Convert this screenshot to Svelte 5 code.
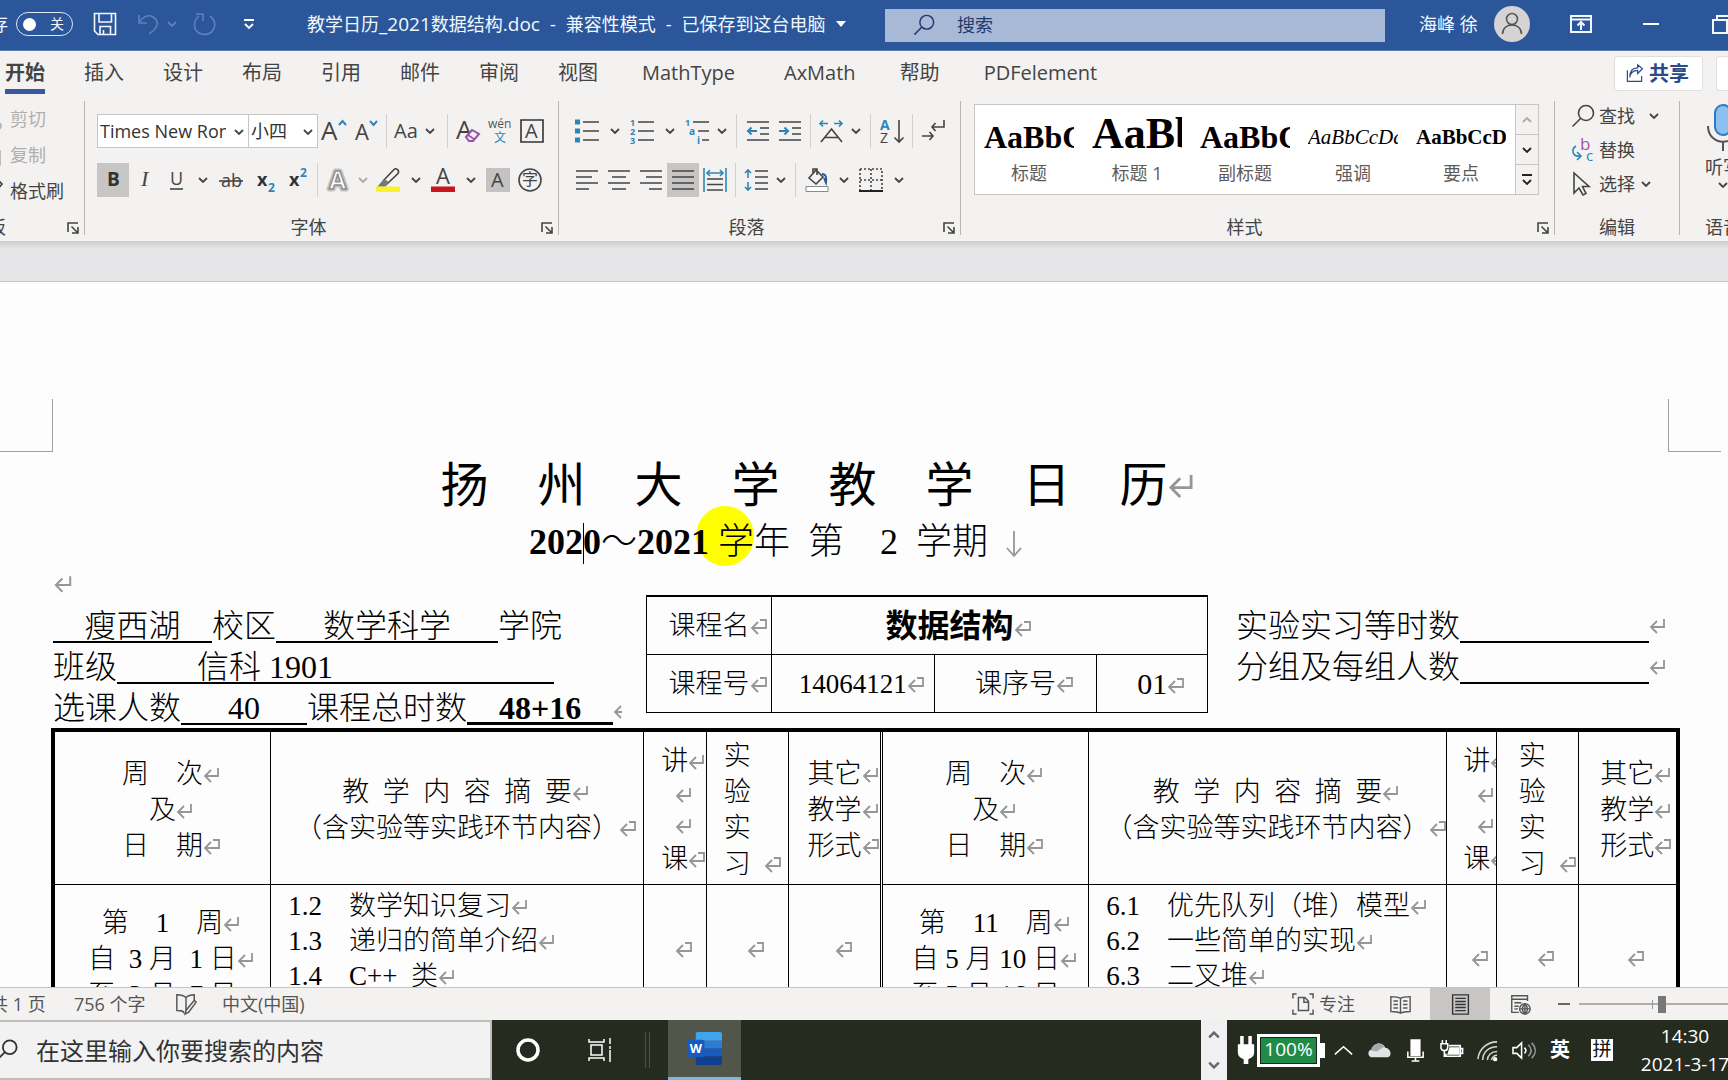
<script>
  const tabs = ['开始', '插入', '设计', '布局', '引用', '邮件', '审阅', '视图', 'MathType', 'AxMath', '帮助', 'PDFelement'];

  const t = (x, y, size, fill, text, extra = '') =>
    `<text x="${x}" y="${y}" font-size="${size}" fill="${fill}" stroke="none" font-family="Open Sans, Noto Sans CJK SC, sans-serif" ${extra}>${text}</text>`;
  const dark = '#444';
  const blue = '#2e86b8';

  const icons = {
    save: '<path d="M1.5 1.5h21v21H5l-3.500-3.500zM6 1.500v8.500h12.500V1.500M7 22.500v-8h10.500v8M10.500 22v-4"/>',
    undo: '<path d="M2 3v8h8M2 11c3-6 9-9 14-6 6 4 5 9 1 13l-5 4"/>',
    redo: '<path d="M3 2h7v7M6 4C0 9 0 17 6 21c6 3 13 1 15-5 2-5 0-9-4-12"/>',
    search: '<circle cx="15" cy="9" r="7.500"/><path d="M9.500 14.500L1.500 22.500"/>',
    display: '<path d="M2 4h20v16H2zM2 7.500h20M12 18v-7M8.500 13.500L12 10l3.500 3.500" stroke-width="2"/>',
    restore: '<path d="M2 8h14v13H2zM6 8V4h15v13h-5" stroke-width="2"/>',
    user: '<circle cx="12" cy="7" r="5.500"/><path d="M2.500 22c0-12 19-12 19 0"/>',
    share: '<path d="M3 8v14h18v-7M6 17c1-7 5-9 10-9v4l6-6-6-5v4C9 5 6 9 6 17z" stroke-width="1.500"/>',
    grow: t(-1, 21, 26, dark, 'A') + '<path d="M17 6l3.500-4L24 6" stroke="#2e86b8" stroke-width="2"/>',
    shrink: t(1, 21, 22, dark, 'A') + '<path d="M16 2l3.500 4L23 2" stroke="#2e86b8" stroke-width="2"/>',
    clear: t(0, 20, 26, dark, 'A') + '<path d="M10 18l6-7 7 4-6 7h-4z" stroke="#9b4fa8" stroke-width="2" fill="#f3f2f1"/><path d="M12 16l6 4" stroke="#9b4fa8"/>',
    phonetic: t(0, 9, 12, '#555', 'wén') + t(6, 23, 12, blue, '文'),
    frame: '<path d="M1 1h22v22H1z" stroke="#333"/>' + t(5, 19, 20, dark, 'A'),
    bold: t(6, 18, 19, '#333', 'B', 'font-weight="bold"'),
    italic: '<text x="8" y="18" font-size="22" fill="#444" stroke="none" font-family="Liberation Serif, serif" font-style="italic">I</text>',
    underline: t(5, 17, 18, dark, 'U') + '<path d="M5 21h13"/>',
    strike: t(2, 19, 18, dark, 'ab') + '<path d="M0 13h24"/>',
    sub: t(2, 18, 18, '#333', 'x', 'font-weight="bold"') + t(13, 24, 12, blue, '2', 'font-weight="bold"'),
    sup: t(2, 18, 18, '#333', 'x', 'font-weight="bold"') + t(13, 9, 12, blue, '2', 'font-weight="bold"'),
    effects: '<g style="font-family: Open Sans, sans-serif; font-weight: bold; font-size: 25px; stroke-linejoin: round"><text x="3" y="21" style="fill: #c4c4c4; stroke: #c4c4c4; stroke-width: 5px">A</text><text x="3" y="21" style="fill: #fff; stroke: #8f8f8f; stroke-width: 1.500px">A</text></g>',
    marker: '<path d="M8 12L18 1.500c2-2 6 1 4 4L12 15z"/><path d="M8 12l4 3-3 3H3z" fill="#777" stroke="#777"/><path d="M0 18.500h24v5.500H0z" fill="#f8f32b" stroke="none"/>',
    color: t(5, 16, 22, dark, 'A') + '<path d="M0 18.500h24v5.500H0z" fill="#c8161d" stroke="none"/>',
    shade: '<path d="M0 0h24v24H0z" fill="#c5c3c2" stroke="none"/>' + t(5, 19, 20, dark, 'A'),
    circled: '<circle cx="12" cy="12" r="11"/>' + t(4, 17, 16, dark, '字'),
    bullets: '<path d="M8 3h16M8 12h16M8 21h16"/><path d="M0 .5h5v5H0zM0 9.500h5v5H0zM0 18.500h5v5H0z" fill="#2e86b8" stroke="none"/>',
    numbers: '<path d="M8 3h16M8 12h16M8 21h16"/>' + t(0, 7, 9, blue, '1', 'font-weight="bold"') + t(0, 16, 9, blue, '2', 'font-weight="bold"') + t(0, 25, 9, blue, '3', 'font-weight="bold"'),
    levels: '<path d="M8 3h16M13 12h11M17 21h7"/>' + t(0, 7, 9, blue, '1', 'font-weight="bold"') + t(4, 16, 10, blue, 'a', 'font-weight="bold"') + t(12, 25, 10, blue, 'i', 'font-weight="bold"'),
    outdent: '<path d="M1 3h22M14 9h9M14 15h9M1 21h22"/><path d="M11 12H2M5.500 8.500L2 12l3.500 3.500" stroke="#2e86b8" stroke-width="2"/>',
    indent: '<path d="M1 3h22M14 9h9M14 15h9M1 21h22"/><path d="M1 12h9M6.500 8.500L10 12l-3.500 3.500" stroke="#2e86b8" stroke-width="2"/>',
    asian: '<path d="M2 23L12.500 10 23 23M6 18.500h13"/><path d="M9 4.500H1M4 1.500L1 4.500l3 3M15 4.500h8M20 1.500l3 3-3 3" stroke="#2e86b8"/>',
    sort: t(0, 11, 14, blue, 'A', 'font-weight="bold"') + t(0, 24, 14, dark, 'Z') + '<path d="M19 1v22M14.500 18.500L19 23l4.500-4.500"/>',
    marks: '<path d="M23 1v7H11M14.500 4L11 8l3.500 4M1 17h11M8.500 13l3.500 4-3.500 4"/>',
    left: '<path d="M1 3h22M1 9h16M1 15h22M1 21h13"/>',
    center: '<path d="M1 3h22M5 9h14M1 15h22M5 21h14"/>',
    right: '<path d="M1 3h22M7 9h16M1 15h22M10 21h13"/>',
    justify: '<path d="M1 3h22M1 9h22M1 15h22M1 21h22"/>',
    spread: '<path d="M4 11h16M4 16.500h16M4 22h16"/><path d="M1 0v24M23 0v24M4 5h16M7 2L4 5l3 3M17 2l3 3-3 3" stroke="#2e86b8"/>',
    spacing: '<path d="M11 3h13M11 9h13M11 15h13M11 21h13"/><path d="M4 2v8M1 5l3-3 3 3M4 22v-8M1 19l3 3 3-3" stroke="#2e86b8"/>',
    bucket: '<path d="M4 10l7-8 7 7-7 7zM8 6V1h4v6"/><path d="M17 6c4 0 5 4 4 9l-2-5" stroke="#2b579a" stroke-width="1.800"/><path d="M1 18.500h22v5H1z" fill="#fff" stroke="#888" stroke-width="1"/>',
    border: '<path d="M1 1h22v22M1 1v22M12 1v22M1 12h22" stroke-dasharray="2 2"/><path d="M0 23h24" stroke="#222" stroke-width="2"/>',
    replace: t(9, 12, 17, '#a64fb0', 'b') + t(15, 23, 15, blue, 'c') + '<path d="M5 8c-5 3-4 11 4 10M6 14l4 4-4 4" stroke="#2e86b8"/>',
    cursor: '<path d="M3 1v20l5-5 4 7 3-1.500-3.500-7H18z"/>',
    cut: '<path d="M8 2l8 14M16 2L8 16" /><circle cx="18" cy="19" r="3"/>',
    copy: '<path d="M4 6l8-5 8 7v14H4zM8 12h10M8 17h10"/>',
    brush: '<path d="M4 18L14 6l5-4 3 3-5 6-8 11M10 10l6 5"/>',
    proof: '<path d="M12 5v14M12 5c-3-3-6-3-10-3v17c4 0 7 0 8 3M12 5c3-3 6-3 9-3v6"/><path d="M21 8l2 2-8 11-4 2 1-4z"/>',
    focus: '<path d="M1 6V1h4M19 1h4v5M1 18v5h4M19 23h4v-5M7 5h7l4 4v10H7zM13 5v5h5"/>',
    book: '<path d="M12 5v17M12 5C9 3 5 3 1 3v17c4 0 8 0 11 2 3-2 7-2 11-2V3c-4 0-8 0-11 2M4 8h5M4 12h5M4 16h5M15 8h5M15 12h5M15 16h5"/>',
    page: '<path d="M3 1h18v22H3zM6 5h12M6 8.500h12M6 12h12M6 15.500h12M6 19h12"/>',
    web: '<path d="M20 8V2H2v19h8M2 6h18M5 10h8M5 14h5M5 17h4"/><circle cx="17" cy="17" r="6"/><path d="M11 17h12M17 11v12M17 11c-4 4-4 8 0 12 4-4 4-8 0-12"/>',
    cortana: '<circle cx="12" cy="12" r="10" stroke-width="3.500"/>',
    tasks: '<path d="M1 1v3h15V1M3 7h11v10H3zM1 23v-3h15v3M22 0v6M22 12v12M22 8v3" stroke-width="1.500"/>',
    plug: '<path d="M5 7h14v7c0 4-3 5-5 6v4h-4v-4c-2-1-5-2-5-6zM7 0h3v8H7zM14 0h3v8h-3z" fill="#fff" stroke="none"/>',
    up: '<path d="M3 16l9-8 9 8"/>',
    cloud: '<path d="M3 19c-4-2-3-8 1-8 1-7 11-9 14-2 5 0 8 8 3 10z" fill="#e4e4e4" stroke="none"/><path d="M3 12c2-9 12-9 14-4l-8 5z" fill="#aaa" stroke="none"/>',
    mic: '<path d="M7.500 1h9v16h-9z" fill="#fff"/><path d="M4 13v6h16v-6M12 19v4M8 23h8"/>',
    power: '<path d="M9 7h12v11H6v-3M21 10h2.500v5H21" stroke-width="1.800"/><path d="M10 8.500h10v8H7.500z" fill="#fff" stroke="none"/><path d="M1 5h7v4c0 4-7 4-7 0zM2.500 1v4M6.500 1v4M4.500 12v6H7"/>',
    wifi: '<path d="M2 21C3 11 11 3 22 3M7 22c0-8 6-14 15-14M12 22c0-5 4-9 10-9M16 22c1-3 3-5 6-5" opacity=".8"/><circle cx="20" cy="21" r="1.500" fill="#fff"/>',
    volume: '<path d="M1 9h4l5-5v16l-5-5H1zM13 9c2 2 2 4 0 6"/><path d="M17 6c4 4 4 8 0 12M20.500 4c5 5 5 11 0 16" opacity=".5"/>'
  };

  const fontTop = [
    { i: 'grow', w: 32, l: '增大字号' }, { i: 'shrink', w: 32, l: '减小字号' }, { sep: 1, w: 9 },
    { aa: 1, w: 52, l: '更改大小写', c: 1 }, { sep: 1, w: 9 },
    { i: 'clear', w: 32, l: '清除格式' }, { i: 'phonetic', w: 32, l: '拼音指南' }, { i: 'frame', w: 32, l: '字符边框' }
  ];
  const fontBottom = [
    { i: 'bold', w: 32, l: '加粗', on: 1 }, { i: 'italic', w: 32, l: '倾斜' }, { i: 'underline', w: 52, l: '下划线', c: 1 },
    { i: 'strike', w: 36, l: '删除线' }, { i: 'sub', w: 36, l: '下标' }, { i: 'sup', w: 28, l: '上标' }, { sep: 1, w: 9 },
    { i: 'effects', w: 50, l: '文本效果', c: 1, dim: 1 }, { i: 'marker', w: 55, l: '突出显示', c: 1 }, { i: 'color', w: 55, l: '字体颜色', c: 1 },
    { i: 'shade', w: 32, l: '字符底纹' }, { i: 'circled', w: 32, l: '带圈字符' }
  ];
  const paraTop = [
    { i: 'bullets', w: 55, l: '项目符号', c: 1 }, { i: 'numbers', w: 55, l: '编号', c: 1 }, { i: 'levels', w: 50, l: '多级列表', c: 1 }, { sep: 1, w: 11 },
    { i: 'outdent', w: 32, l: '减少缩进量' }, { i: 'indent', w: 32, l: '增加缩进量' }, { sep: 1, w: 9 },
    { i: 'asian', w: 50, l: '中文版式', c: 1 }, { sep: 1, w: 11 }, { i: 'sort', w: 32, l: '排序' }, { sep: 1, w: 9 }, { i: 'marks', w: 32, l: '编辑标记' }
  ];
  const paraBottom = [
    { i: 'left', w: 32, l: '左对齐' }, { i: 'center', w: 32, l: '居中' }, { i: 'right', w: 32, l: '右对齐' }, { i: 'justify', w: 32, l: '两端对齐', on: 1 },
    { i: 'spread', w: 32, l: '分散对齐' }, { sep: 1, w: 9 }, { i: 'spacing', w: 50, l: '行距', c: 1 }, { sep: 1, w: 11 },
    { i: 'bucket', w: 54, l: '底纹', c: 1 }, { i: 'border', w: 56, l: '边框', c: 1 }
  ];
  const styles = [
    { name: '标题', kind: 'head', text: 'AaBbC' }, { name: '标题 1', kind: 'big', text: 'AaBb' }, { name: '副标题', kind: 'head', text: 'AaBbC' },
    { name: '强调', kind: 'em', text: 'AaBbCcDd' }, { name: '要点', kind: 'strong', text: 'AaBbCcD' }
  ];
  const halves = [
    { week: '第　1　周', from: '自  3 月  1 日', to: '至  3 月  7 日', side: 'first',
      items: [['1.2', '数学知识复习'], ['1.3', '递归的简单介绍'], ['1.4', 'C++  类']] },
    { week: '第　11　周', from: '自 5 月 10 日', to: '至 5 月 16 日', side: 'second',
      items: [['6.1', '优先队列（堆）模型'], ['6.2', '一些简单的实现'], ['6.3', '二叉堆']] }
  ];
  const cols = [218, 373, 63, 82, 94, 207, 358, 50, 82, 100];
  const total = cols.reduce((a, b) => a + b, 0);
  let active = $state('开始');
</script>

{#snippet icon(name, cls = '')}
  <svg class="icon {cls}" viewBox="0 0 24 24" aria-hidden="true">{@html icons[name]}</svg>
{/snippet}

{#snippet chev()}
  <svg class="chev" viewBox="0 0 10 6" aria-hidden="true"><path d="M1 1l4 4 4-4" /></svg>
{/snippet}

{#snippet ret()}<svg class="ret" viewBox="0 0 17 18" aria-hidden="true"><path d="M15 2v8H2M8 4L2 10l6 6" /></svg>{/snippet}
{#snippet end()}<svg class="ret" viewBox="0 0 17 18" aria-hidden="true"><path d="M10 2h6v8H2M8 4L2 10l6 6" /></svg>{/snippet}

{#snippet tools(list)}
  {#each list as b}
    {#if b.sep}
      <span class="split" style:width="{b.w}px"></span>
    {:else}
      <button class="tool" class:on={b.on} class:dim={b.dim} style:width="{b.w}px" aria-label={b.l}>
        {#if b.aa}<span class="aa">Aa</span>{:else}<span class="cell">{@render icon(b.i)}</span>{/if}
        {#if b.c}<span class="drop">{@render chev()}</span>{/if}
      </button>
    {/if}
  {/each}
{/snippet}

{#snippet foot(label, launcher)}
  <div class="foot">
    <span>{label}</span>
    {#if launcher}
      <button class="launch" aria-label="{label}设置"><svg viewBox="0 0 12 12"><path d="M1 10V1h10M4.500 4.500L11 11M11 5v6H5" /></svg></button>
    {/if}
  </div>
{/snippet}

<div class="app">
  <header class="title">
    <label class="auto"><span>存</span><input type="checkbox" /><span class="switch"><i></i>关</span></label>
    <button class="save" aria-label="保存">{@render icon('save')}</button>
    <button class="undo faded" aria-label="撤消">{@render icon('undo')}{@render chev()}</button>
    <button class="redo faded" aria-label="重做">{@render icon('redo')}</button>
    <button class="custom" aria-label="自定义快速访问工具栏"><svg viewBox="0 0 12 11"><path d="M1 1h10M2 5l4 4 4-4" /></svg></button>
    <button class="name"><span>教学日历<small>_2021</small>数据结构<small>.doc</small></span><span>-</span><span>兼容性模式</span><span>-</span><span>已保存到这台电脑</span><i></i></button>
    <label class="find">{@render icon('search')}<input type="text" placeholder="搜索" aria-label="搜索" /></label>
    <div class="account">
      <button class="who">海峰 徐<span class="avatar">{@render icon('user')}</span></button>
      <button class="disp" aria-label="功能区显示选项">{@render icon('display')}</button>
      <button class="min" aria-label="最小化"></button>
      <button class="rest" aria-label="向下还原">{@render icon('restore')}</button>
    </div>
  </header>

  <nav class="tabs">
    {#each tabs as tab}
      <button class:active={tab === active} class:latin={/^[A-Z]/.test(tab)} onclick={() => (active = tab)}>{tab}</button>
    {/each}
    <div class="side">
      <button class="share">{@render icon('share')}共享</button>
      <button class="comment" aria-label="批注"></button>
    </div>
  </nav>

  <section class="ribbon">
    <div class="group clip">
      <button class="off">{@render icon('cut')}剪切</button>
      <button class="off">{@render icon('copy')}复制</button>
      <button>{@render icon('brush')}格式刷</button>
      {@render foot('剪贴板', true)}
    </div>
    <div class="group font">
      <div class="row">
        <span class="combo face"><select aria-label="字体"><option>Times New Roman</option></select>{@render chev()}</span>
        <span class="combo size"><select aria-label="字号"><option>小四</option></select>{@render chev()}</span>
        {@render tools(fontTop)}
      </div>
      <div class="row">{@render tools(fontBottom)}</div>
      {@render foot('字体', true)}
    </div>
    <div class="group para">
      <div class="row">{@render tools(paraTop)}</div>
      <div class="row">{@render tools(paraBottom)}</div>
      {@render foot('段落', true)}
    </div>
    <div class="group styles">
      <div class="gallery">
        {#each styles as s}
          <button class="style"><span class="sample {s.kind}">{s.text}</span><span class="label">{s.name}</span></button>
        {/each}
        <div class="scroll">
          <button class="flip" aria-label="上一行">{@render chev()}</button>
          <button aria-label="下一行">{@render chev()}</button>
          <button class="more" aria-label="其他样式">{@render chev()}</button>
        </div>
      </div>
      {@render foot('样式', true)}
    </div>
    <div class="group edit">
      <button>{@render icon('search')}查找<span class="far">{@render chev()}</span></button>
      <button>{@render icon('replace')}替换</button>
      <button>{@render icon('cursor')}选择<span class="near">{@render chev()}</span></button>
      {@render foot('编辑', false)}
    </div>
    <div class="group voice">
      <button>
        <svg class="mike" viewBox="0 0 36 48"><rect x="10" y="1" width="16" height="30" rx="8" fill="#8cc0f0" stroke="#2f78c4" stroke-width="2" /><path d="M3 22c0 21 30 21 30 0M18 38v9" fill="none" stroke="#555" stroke-width="2" /></svg>
        <span>听写</span>{@render chev()}
      </button>
      {@render foot('语音', false)}
    </div>
  </section>

  <main class="canvas">
    <article class="page">
      <div class="corners"><i class="cl"></i><i class="cr"></i></div>
      <h1>{#each '扬州大学教学日历' as ch}<span>{ch}</span>{/each}{@render ret()}</h1>
      <h2><b>202<i class="caret"></i>0</b>～<b>2021</b> <span class="spot">学</span>年  第    2  学期  <svg class="down" viewBox="0 0 18 28" aria-hidden="true"><path d="M9 1v25M2 18l7 8 7-8" /></svg></h2>
      <div class="blank">{@render ret()}</div>

      <div class="info">
        <div class="lines">
          <p><u class="f1">瘦西湖</u>校区<u class="f2">数学科学</u>学院</p>
          <p>班级<u class="f3">信科 1901</u></p>
          <p>选课人数<u class="f4">40</u>课程总时数<u class="f5">48+16</u><span class="cutmark">{@render ret()}</span></p>
        </div>
        <table class="course">
          <colgroup><col class="k1" /><col class="k2" /><col class="k3" /><col class="k4" /></colgroup>
          <tbody>
            <tr><th>课程名{@render end()}</th><td colspan="3" class="subject">数据结构{@render end()}</td></tr>
            <tr><th>课程号{@render end()}</th><td>14064121{@render end()}</td><td>课序号{@render end()}</td><td class="no">01{@render end()}</td></tr>
          </tbody>
        </table>
        <div class="lines extra">
          <p>实验实习等时数<u class="f6"></u>{@render ret()}</p>
          <p>分组及每组人数<u class="f6"></u>{@render ret()}</p>
        </div>
      </div>

      <table class="plan">
        <colgroup>{#each cols as c}<col style:width="{(c / total) * 100}%" />{/each}</colgroup>
        <thead>
          <tr>
            {#each halves as h}
              <th>周　次{@render ret()}<br />及{@render ret()}<br />日　期{@render end()}</th>
              <th><div class="crop">教  学  内  容  摘  要{@render ret()}<br />（含实验等实践环节内容）{@render end()}</div></th>
              <th class="talk {h.side}"><div class="crop">讲{@render ret()}<br /><em>{@render ret()}</em><em>{@render ret()}</em>课{@render end()}</div></th>
              <th class="lab {h.side}">实<br />验<br />实<br />习&nbsp;&nbsp;{@render end()}</th>
              <th class="other {h.side}">其它{@render ret()}<br />教学{@render ret()}<br />形式{@render end()}</th>
            {/each}
          </tr>
        </thead>
        <tbody>
          <tr>
            {#each halves as h}
              <td class="date">{h.week}{@render ret()}<br />{h.from}{@render ret()}<br />{h.to}{@render end()}</td>
              <td class="topics">{#each h.items as it}<div>{it[0]}　{it[1]}{@render ret()}</div>{/each}</td>
              <td class="none {h.side}">{@render end()}</td>
              <td class="none {h.side}">{@render end()}</td>
              <td class="none other {h.side}">{@render end()}</td>
            {/each}
          </tr>
        </tbody>
      </table>
    </article>
  </main>

  <footer class="status">
    <span class="pages">共 1 页</span>
    <span class="words">756 个字</span>
    {@render icon('proof')}
    <span class="lang">中文(中国)</span>
    <div class="views">
      <button class="focus">{@render icon('focus')}专注</button>
      <button class="view" aria-label="阅读视图">{@render icon('book')}</button>
      <button class="view cur" aria-label="页面视图">{@render icon('page')}</button>
      <button class="view" aria-label="Web 版式视图">{@render icon('web')}</button>
      <button class="minus" aria-label="缩小"></button>
      <span class="zoom"><input type="range" min="0" max="100" value="54" aria-label="缩放" /></span>
    </div>
  </footer>

  <div class="taskbar">
    <label class="seek">{@render icon('search')}<input type="text" placeholder="在这里输入你要搜索的内容" aria-label="在这里输入你要搜索的内容" /></label>
    <button class="tb cort" aria-label="Cortana">{@render icon('cortana')}</button>
    <button class="tb" aria-label="任务视图">{@render icon('tasks')}</button>
    <span class="bars"></span>
    <button class="word" aria-label="Word">
      <svg viewBox="0 0 36 34"><path d="M9 2q0-2 2-2h23q2 0 2 2v7H9z" fill="#41a5ee" /><path d="M9 9h27v8H9z" fill="#2b7cd3" /><path d="M9 17h27v8H9z" fill="#185abd" /><path d="M9 25h27v7q0 2-2 2H11q-2 0-2-2z" fill="#103f91" /><rect y="8" width="18" height="18" rx="2" fill="#185abd" /><text x="9" y="22" font-size="13" font-weight="bold" text-anchor="middle" fill="#fff" font-family="Open Sans, sans-serif">W</text></svg>
    </button>
    <div class="tray">
      <div class="roll"><button class="flip" aria-label="向上">{@render chev()}</button><button aria-label="向下">{@render chev()}</button></div>
      <span class="plug">{@render icon('plug')}</span>
      <span class="battery">100%</span>
      <button class="ti" aria-label="显示隐藏的图标">{@render icon('up')}</button>
      <button class="ti" aria-label="OneDrive">{@render icon('cloud')}</button>
      <button class="ti" aria-label="麦克风">{@render icon('mic')}</button>
      <button class="ti" aria-label="电源">{@render icon('power')}</button>
      <button class="ti" aria-label="网络">{@render icon('wifi')}</button>
      <button class="ti" aria-label="音量">{@render icon('volume')}</button>
      <button class="ime">英</button>
      <button class="pin"><span>拼</span></button>
      <button class="clock"><span>14:30</span><span>2021-3-17</span></button>
    </div>
  </div>
</div>

<style>
  :global(body) { margin: 0; overflow: hidden; }
  .app { display: flex; flex-direction: column; height: 100vh; overflow: hidden; font: 18px/24px 'Open Sans', 'Noto Sans CJK SC', sans-serif; color: #444; background: #f3f2f1; }
  .app * { box-sizing: border-box; }
  button { font: inherit; color: inherit; background: none; border: 0; padding: 0; margin: 0; display: flex; align-items: center; white-space: nowrap; flex: none; }
  input, select { font: inherit; color: inherit; background: none; border: 0; margin: 0; padding: 0; min-width: 0; outline: 0; }
  .icon { width: 24px; height: 24px; fill: none; stroke: currentColor; stroke-width: 1.6; flex: none; display: block; overflow: visible; }
  .chev { width: 10px; height: 6px; fill: none; stroke: currentColor; stroke-width: 1.8; flex: none; display: block; }

  .title { display: flex; align-items: center; height: 51px; flex: none; background: #2b579a; color: #f2f8ff; padding-bottom: 2px; border-bottom: 1px solid #5b7fb0; }
  .title > * { flex: none; }
  .auto { display: flex; align-items: center; gap: 8px; margin-left: -10px; width: 103px; }
  .auto input { position: absolute; opacity: 0; }
  .switch { display: flex; align-items: center; justify-content: space-between; width: 57px; height: 24px; border: 1px solid #dce8f8; border-radius: 12px; padding: 0 8px 0 6px; font-size: 14px; }
  .switch i { width: 13px; height: 13px; border-radius: 50%; background: #fff; }
  .save { width: 44px; }
  .faded { color: #5f82ba; }
  .undo { width: 56px; gap: 6px; }
  .redo { width: 50px; }
  .custom { width: 64px; }
  .custom svg { width: 12px; height: 11px; fill: none; stroke: #fff; stroke-width: 1.8; }
  .name { width: 578px; gap: 10px; }
  .name small { font-size: 19px; }
  .name i { border: 5px solid transparent; border-top: 6px solid #fff; border-bottom: 0; }
  .title .find { display: flex; align-items: center; flex: 1 1 500px; max-width: 500px; height: 33px; margin-top: 2px; background: #a8b9d7; color: #1f3b6e; padding-left: 28px; gap: 22px; }
  .find .icon { width: 22px; height: 22px; }
  .find input::placeholder { color: #1f3b6e; opacity: 1; }
  .account { display: flex; align-items: center; flex: none; width: 309px; margin-left: auto; overflow: hidden; height: 47px; }
  .who { width: 150px; gap: 16px; }
  .avatar { display: flex; align-items: center; justify-content: center; width: 36px; height: 36px; border-radius: 50%; background: #d4d4d4; color: #555; }
  .disp { width: 74px; }
  .min { width: 16px; height: 2px; background: #fff; margin-right: 52px; }

  .tabs { display: flex; height: 45px; flex: none; padding-left: 5px; gap: 39px; font-size: 20px; }
  .tabs > button { height: 43px; border-bottom: 5px solid transparent; padding-top: 6px; }
  .tabs > .latin { padding-left: 5px; padding-right: 5px; }
  .tabs > .active { font-weight: bold; border-color: #3b5998; }
  .side { margin-left: auto; display: flex; gap: 13px; padding-top: 5px; overflow: hidden; }
  .share, .comment { height: 35px; background: #fff; border: 1px solid #e1dfdd; border-radius: 3px; color: #2b4a86; font-weight: bold; }
  .share { width: 89px; padding-left: 10px; gap: 5px; }
  .share .icon { width: 19px; height: 19px; }
  .comment { width: 12px; border-right: 0; border-radius: 3px 0 0 3px; }

  .ribbon { display: flex; flex: none; height: 145px; padding: 5px 0 6px; overflow: hidden; }
  .group { display: flex; flex-direction: column; flex: none; height: 134px; border-right: 1px solid #b9b7b5; }
  .foot { display: flex; align-items: center; margin-top: auto; height: 16px; }
  .foot span { flex: 1; text-align: center; white-space: nowrap; }
  .launch { margin-left: 9px; margin-right: 5px; padding-top: 2px; }
  .launch svg { width: 12px; height: 12px; fill: none; stroke: #444; stroke-width: 1.6; }
  .clip { width: 85px; }
  .clip > button { height: 36px; gap: 6px; margin-left: -20px; }
  .clip > .off { color: #b1afad; }
  .clip .foot span { margin-left: -48px; text-align: left; }
  .clip .foot .launch { margin-left: 0; }
  .font { width: 474px; padding-top: 13px; }
  .row { display: flex; height: 34px; margin-bottom: 15px; padding-left: 12px; align-items: stretch; }
  .para { width: 402px; padding-top: 13px; }
  .combo { position: relative; display: flex; align-items: center; background: #fff; border: 1px solid #c8c6c4; }
  .combo + .combo { border-left: 0; }
  .combo select { appearance: none; height: 32px; flex: 1; padding: 0 0 0 2px; margin-right: 22px; overflow: hidden; text-overflow: clip; color: #333; font-size: 18px; }
  .combo .chev { position: absolute; right: 4px; top: 14px; }
  .face { width: 152px; }
  .size { width: 69px; }
  .tool { justify-content: center; }
  .tool.on { background: #c8c6c4; }
  .tool.dim { color: #aaa; }
  .cell { display: flex; justify-content: center; width: 32px; flex: none; }
  .drop { display: flex; justify-content: center; flex: 1; }
  .aa { font-size: 20px; padding-left: 3px; }
  .split { display: flex; justify-content: center; flex: none; }
  .split::before { content: ''; width: 1px; background: #d2d0ce; }

  .styles { flex: 1 1 593px; min-width: 0; padding-top: 3px; }
  .gallery { display: flex; margin: 0 15px 0 13px; height: 91px; background: #fff; border: 1px solid #c8c6c4; overflow: hidden; }
  .style { flex: 1 1 108px; min-width: 0; flex-direction: column; align-items: stretch; padding: 0 9px; }
  .sample { height: 56px; overflow: hidden; color: #000; font-family: 'Liberation Serif', serif; text-align: left; white-space: nowrap; }
  .head { font-size: 32px; line-height: 64px; font-weight: bold; }
  .big { font-size: 44px; line-height: 58px; font-weight: bold; }
  .em { font-size: 21px; line-height: 64px; font-style: italic; }
  .strong { font-size: 21px; line-height: 64px; font-weight: bold; }
  .style .label { color: #5e5c5a; text-align: center; }
  .scroll { display: flex; flex-direction: column; width: 23px; border-left: 1px solid #c8c6c4; background: #f3f2f1; flex: none; }
  .scroll button { flex: 1; justify-content: center; color: #222; }
  .scroll button + button { border-top: 1px solid #c8c6c4; }
  .flip .chev { transform: rotate(180deg); }
  .scroll .flip { color: #aaa; }
  .scroll .more { flex-direction: column; gap: 3px; }
  .more::before { content: ''; width: 10px; height: 2px; background: #222; }
  .edit { width: 125px; }
  .edit > button { height: 34px; padding-left: 16px; gap: 4px; padding-bottom: 4px; }
  .far { padding-left: 10px; }
  .near { padding-left: 2px; }
  .voice { width: 48px; padding: 3px 0 0 25px; border: 0; }
  .voice button { flex-direction: column; width: 36px; }
  .mike { width: 36px; height: 48px; }
  .voice button > span { line-height: 30px; }
  .voice .foot span { flex: none; }

  .canvas { flex: 1; min-height: 0; overflow: hidden; padding-top: 40px; background: linear-gradient(#cdcdcf, #e6e6e8 8px); }
  .page { background: #fdfdfd; border-top: 1px solid #c6c6c6; color: #000; font-family: 'Liberation Serif', 'Noto Sans CJK SC', serif; font-weight: 300; }
  .ret { width: 17px; height: 18px; margin-right: -17px; vertical-align: -1px; fill: none; stroke: #969696; stroke-width: 1.8; overflow: visible; }
  .corners { display: flex; justify-content: space-between; padding: 117px 7px 0 0; }
  .corners i { width: 53px; height: 53px; border-bottom: 1px solid #a0a0a0; }
  .cl { border-right: 1px solid #a0a0a0; }
  .cr { border-left: 1px solid #a0a0a0; }
  h1, h2, p { margin: 0; font-weight: inherit; }
  h1 { display: flex; justify-content: center; align-items: center; gap: 49px; padding: 2px 124px 0 0; height: 66px; font-size: 48px; line-height: 64px; font-weight: 400; }
  h1 .ret { width: 28px; height: 28px; margin-left: -50px; margin-right: -31px; }
  h2 { height: 48px; font-size: 36px; line-height: 48px; text-align: center; white-space: pre; padding-right: 176px; isolation: isolate; }
  h2 b { font-weight: bold; }
  .caret { display: inline-block; width: 1px; height: 41px; margin-right: -1px; background: #000; vertical-align: -10px; }
  .spot { position: relative; }
  .spot::before { content: ''; position: absolute; z-index: -1; left: -22px; top: -16px; width: 58px; height: 60px; border-radius: 50%; background: #ffff00; }
  .down { width: 18px; height: 28px; margin-left: 8px; fill: none; stroke: #969696; stroke-width: 1.8; vertical-align: -4px; }
  .blank { height: 29px; padding-left: 53px; line-height: 29px; }
  .blank .ret { width: 20px; height: 20px; vertical-align: -8px; }

  .info { display: grid; grid-template-columns: 593fr 562fr 472fr; height: 133px; padding: 0 48px 0 53px; }
  .lines { padding-top: 10px; font-size: 32px; line-height: 43px; min-width: 0; }
  .lines p { display: flex; height: 41px; white-space: pre; }
  .lines u { height: 38px; text-decoration: none; border-bottom: 2px solid #000; text-align: center; flex: none; }
  .lines .ret { margin-top: 12px; flex: none; }
  .f1 { width: 159px; }
  .f2 { width: 222px; }
  .lines .f3 { width: 437px; text-align: left; padding-left: 80px; }
  .f4 { width: 126px; }
  .lines .f5 { width: 146px; font-weight: bold; border-width: 3px; }
  .f6 { width: 189px; }
  .cutmark { display: block; width: 9px; overflow: hidden; }
  .extra { padding-left: 28px; }
  table { border-collapse: collapse; table-layout: fixed; }
  th, td { font-weight: inherit; padding: 0; font-size: 27px; line-height: 36px; text-align: center; border: 1px solid #000; white-space: pre; }
  .course { width: 100%; height: 118px; border-top: 2px solid #000; }
  .k1 { width: 125px; }
  .k2 { width: 29%; }
  .k3 { width: 29%; }
  .course .subject { font-size: 32px; font-weight: bold; padding-right: 80px; }
  .course .no { font-size: 30px; }

  .plan { width: auto; min-width: calc(100% - 99px); max-width: calc(100% - 99px); margin-left: 51px; border: 4px solid #000; }
  .plan thead tr { height: 154px; }
  .plan thead th { padding-top: 5px; }
  .plan tbody td { vertical-align: top; height: 150px; }
  .crop { overflow: hidden; }
  .talk em { display: block; height: 31px; line-height: 31px; }
  .talk.second { padding-left: 11px; }
  .lab { text-align: left; padding-left: 17px; }
  .lab.second { padding-left: 22px; }
  .other.first { border-right: 3px double #000; }
  .plan .date { padding-top: 20px; }
  .plan .topics { text-align: left; padding: 4px 0 0 17px; line-height: 35px; }
  .plan .none { padding-top: 46px; }
  .plan .none.second { padding-top: 55px; }

  .status { display: flex; align-items: center; flex: none; height: 33px; border-top: 1px solid #c8c6c4; background: #f3f2f1; color: #555; overflow: hidden; white-space: nowrap; }
  .pages { width: 84px; margin-left: -10px; }
  .words { width: 101px; }
  .status > .icon { width: 22px; height: 22px; margin-right: 25px; }
  .views { display: flex; align-items: center; margin-left: auto; height: 32px; }
  .focus { gap: 5px; width: 78px; }
  .focus .icon { width: 22px; height: 22px; }
  .view { width: 60px; height: 32px; justify-content: center; }
  .view .icon { width: 21px; height: 21px; }
  .cur { background: #c8c6c4; color: #333; }
  .minus { width: 12px; height: 2px; background: #666; margin: 0 9px 0 8px; }
  .zoom { width: 149px; overflow: hidden; height: 32px; display: flex; align-items: center; position: relative; }
  .zoom::before { content: ''; position: absolute; left: 73px; top: 12px; width: 1px; height: 9px; background: #999; }
  .zoom input { appearance: none; width: 155px; flex: none; height: 2px; background: #b0aeac; }
  .zoom input::-webkit-slider-thumb { appearance: none; width: 8px; height: 17px; background: #777; }

  .taskbar { display: flex; flex: none; height: 60px; background: #252b1f; color: #fff; overflow: hidden; }
  .seek { display: flex; align-items: center; width: 492px; flex: none; background: #f2f2f2; border: 2px solid #bdbdbd; border-left: 0; color: #333; gap: 18px; font-size: 24px; }
  .seek .icon { width: 22px; height: 22px; margin-left: -4px; stroke-width: 2; }
  .seek input { flex: 1; }
  .seek input::placeholder { color: #333; opacity: 1; }
  .tb { width: 72px; justify-content: center; }
  .bars { width: 5px; height: 36px; margin: 12px 18px 0 9px; border: 1px solid #4c5147; border-width: 0 1px; }
  .word { width: 73px; justify-content: center; background: #51564b; border-bottom: 3px solid #84b6dc; }
  .word svg { width: 35px; height: 33px; }
  .tray { display: flex; align-items: center; width: 527px; flex: none; margin-left: auto; overflow: hidden; }
  .roll { display: flex; flex-direction: column; width: 26px; height: 60px; background: #f0eff1; color: #666; flex: none; }
  .roll button { flex: 1; justify-content: center; }
  .roll .chev { width: 12px; height: 8px; stroke-width: 2; }
  .plug { width: 30px; padding-left: 5px; flex: none; }
  .plug .icon { width: 28px; height: 34px; }
  .battery { position: relative; width: 63px; height: 33px; flex: none; margin-right: 5px; border: 3px solid #fff; background: #218a48; text-align: center; font-size: 19px; line-height: 25px; box-shadow: inset 0 0 0 1px #16241a; }
  .battery::after { content: ''; position: absolute; right: -8px; top: 6px; width: 5px; height: 15px; background: #fff; }
  .ti { width: 36px; justify-content: center; }
  .ti .icon { width: 23px; height: 23px; }
  .ime { width: 38px; justify-content: center; font-weight: bold; font-size: 20px; }
  .pin { width: 46px; justify-content: center; }
  .pin span { width: 22px; height: 22px; line-height: 21px; background: #fff; color: #111; font-size: 19px; text-align: center; }
  .clock { flex-direction: column; width: 100px; flex: none; margin-left: 10px; font-size: 19px; line-height: 28px; }
</style>
